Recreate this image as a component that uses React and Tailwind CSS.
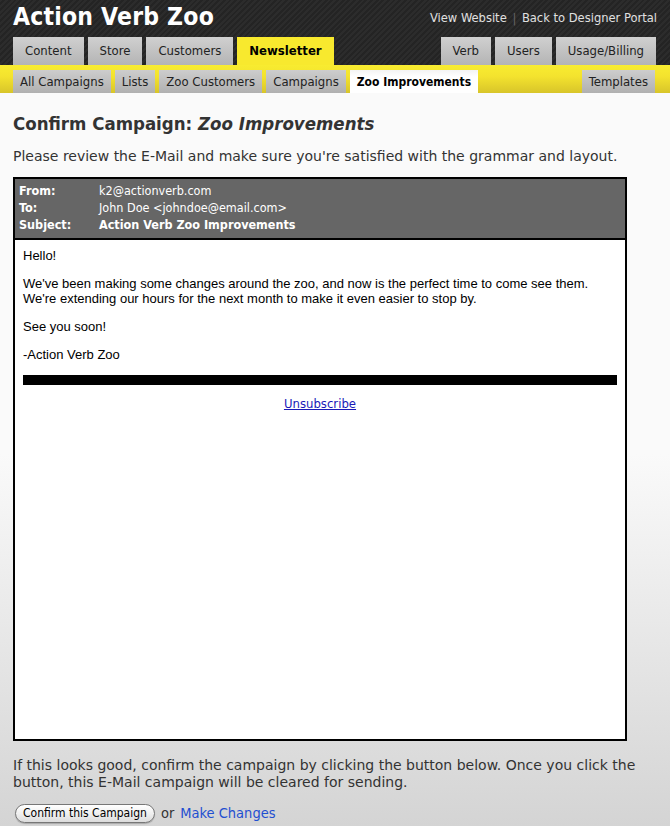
import React from 'react';

const mainTabs = ['Content', 'Store', 'Customers', 'Newsletter'];
const rightTabs = ['Verb', 'Users', 'Usage/Billing'];
const subTabs = ['All Campaigns', 'Lists', 'Zoo Customers', 'Campaigns', 'Zoo Improvements'];

const Tab = ({ label, active }) => (
  <div
    className={`h-[28px] px-[12px] flex items-center text-[13px] ${active
      ? 'bg-[#f8e92e] font-bold text-black'
      : 'bg-[linear-gradient(#d0d0d0,#b4b4b4)] text-[#222]'
      }`}
  >
    {label}
  </div>
);

const SubTab = ({ label, active }) => (
  <div
    className={`h-[23px] px-[7px] flex items-center ${active
      ? 'bg-[linear-gradient(#f4f4f4,#ffffff_30%)] font-bold text-black text-[12px]'
      : 'bg-[linear-gradient(#cdcdcd,#b0b0b0)] text-[#222] text-[13px]'
      }`}
  >
    {label}
  </div>
);

export default function App() {
  return (
    <div className="min-h-[826px] flex flex-col font-['DejaVu_Sans_Condensed','DejaVu_Sans',sans-serif] bg-[linear-gradient(#fafafa_0%,#fafafa_55%,#d4d4d4_100%)]">
      {/* dark header */}
      <header className="h-[65px] px-[13px] flex flex-col bg-[#292929] bg-[repeating-linear-gradient(135deg,#2c2c2c_0px,#2c2c2c_2px,#242424_2px,#242424_4px)]">
        <div className="h-[37px] flex justify-between">
          <h1 className="text-[24.5px] font-bold text-white leading-[34px] tracking-[0.2px]">Action Verb Zoo</h1>
          <div className="pt-[10px] text-[12.8px] text-[#e0e0e0] leading-[16px]">
            View Website <span className="text-[#666] px-[2px]">|</span> Back to Designer Portal
          </div>
        </div>
        <div className="flex justify-between">
          <div className="flex gap-[4px]">
            {mainTabs.map((t) => <Tab key={t} label={t} active={t === 'Newsletter'} />)}
          </div>
          <div className="flex gap-[4px] pr-[1px]">
            {rightTabs.map((t) => <Tab key={t} label={t} />)}
          </div>
        </div>
      </header>

      {/* yellow sub nav */}
      <nav className="h-[28px] pt-[5px] px-[13px] flex justify-between bg-[linear-gradient(#f8ec30,#f4e32e_40%,#d8c52a)]">
        <div className="flex gap-[4px]">
          {subTabs.map((t) => <SubTab key={t} label={t} active={t === 'Zoo Improvements'} />)}
        </div>
        <div className="pr-[2px]">
          <SubTab label="Templates" />
        </div>
      </nav>

      <main className="px-[13px] text-[#333]">
        <h2 className="pt-[19px] text-[18.5px] font-bold leading-[24px]">
          Confirm Campaign: <em className="italic">Zoo Improvements</em>
        </h2>
        <p className="mt-[10px] font-['DejaVu_Sans',sans-serif] text-[14px] leading-[20px]">
          Please review the E-Mail and make sure you're satisfied with the grammar and layout.
        </p>

        {/* email preview */}
        <div className="mt-[11px] w-[614px] h-[564px] border-2 border-black flex flex-col">
          <div className="bg-[#666] border-b-2 border-black pt-[3px] pb-[5px] px-[4px] text-[12.5px] leading-[17px] text-white">
            <div className="flex"><span className="w-[80px] font-bold">From:</span><span>k2@actionverb.com</span></div>
            <div className="flex"><span className="w-[80px] font-bold">To:</span><span>John Doe &lt;johndoe@email.com&gt;</span></div>
            <div className="flex"><span className="w-[80px] font-bold">Subject:</span><span className="font-bold">Action Verb Zoo Improvements</span></div>
          </div>
          <div className="flex-1 bg-white px-[8px] pt-[8px] font-['Liberation_Sans',Arial,sans-serif] text-[13px] leading-[15px] text-black">
            <p className="mb-[13px]">Hello!</p>
            <p className="mb-[13px]">
              We've been making some changes around the zoo, and now is the perfect time to come see them.<br />
              We're extending our hours for the next month to make it even easier to stop by.
            </p>
            <p className="mb-[13px]">See you soon!</p>
            <p className="mb-[13px]">-Action Verb Zoo</p>
            <div className="h-[10px] bg-black"></div>
            <div className="mt-[12px] text-center font-['DejaVu_Sans_Condensed','DejaVu_Sans',sans-serif] text-[13px] leading-[14px]">
              <a href="#" className="text-[#1a1ab8] underline">Unsubscribe</a>
            </div>
          </div>
        </div>

        <p className="mt-[16px] font-['DejaVu_Sans',sans-serif] text-[14px] leading-[17px] w-[630px]">
          If this looks good, confirm the campaign by clicking the button below. Once you click the button, this E-Mail campaign will be cleared for sending.
        </p>
        <div className="mt-[12px] pl-[2px] flex items-center gap-[6px] text-[14.5px]">
          <button className="h-[19px] px-[7px] rounded-full border border-[#777] bg-[linear-gradient(#ffffff,#f0f0f0_50%,#dcdcdc)] text-[12px] leading-[17px] text-black shadow-[0_1px_1px_rgba(0,0,0,0.2)]">
            Confirm this Campaign
          </button>
          <span>or</span>
          <a href="#" className="text-[#1f4fd1]">Make Changes</a>
        </div>
      </main>
    </div>
  );
}
